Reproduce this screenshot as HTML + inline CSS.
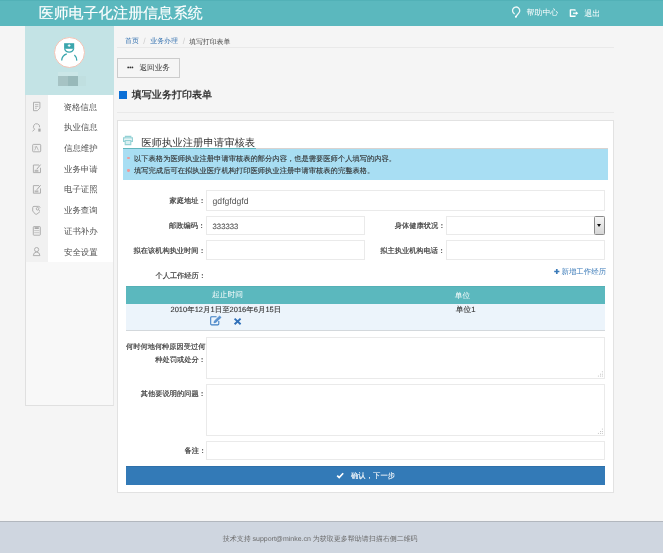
<!DOCTYPE html>
<html><head><meta charset="utf-8">
<style>
*{margin:0;padding:0;box-sizing:border-box}
html,body{width:669px;height:554px;overflow:hidden;background:#fff;font-family:"Liberation Sans",sans-serif;}
.a{position:absolute}
.t{position:absolute;white-space:nowrap;line-height:1;text-rendering:geometricPrecision}
#page{position:absolute;left:0;top:0;width:663px;height:553px;background:#f5f5f5;overflow:hidden;filter:blur(0.35px)}
.inp{position:absolute;background:#fff;border:1px solid #eaeaea}
</style></head>
<body>
<div id="page">

<div class="a" style="left:0;top:0;width:663px;height:26px;background:#5bb8be;border-top:1px solid #52b1b7"></div>
<svg class="a" style="left:506px;top:4px" width="20" height="18" viewBox="506 4 20 18"><path d="M514.3 13.7A3.6 3.6 0 1 1 518.9 12.9L516 16.5" fill="none" stroke="#eef8f8" stroke-width="1.3" stroke-linecap="round"/><circle cx="515.9" cy="16.7" r="1" fill="#fff"/></svg>
<svg class="a" style="left:564px;top:4px" width="20" height="18" viewBox="564 4 20 18"><path d="M575 10.8V9.9H570.4V16.3H575V15.5" fill="none" stroke="#fff" stroke-width="1.4" stroke-linejoin="round"/><path d="M573 13.2H576.4" stroke="#fff" stroke-width="1.2"/><path d="M575.8 11.3L578.3 13.2L575.8 15.1z" fill="#fff"/></svg>

<div class="a" style="left:25px;top:26px;width:89px;height:380.3px;background:#f8f8f8;border:1px solid #e0e0e0;border-top:none;border-right-color:#e6e6e6"></div>
<div class="a" style="left:25px;top:26px;width:89px;height:69px;background:#c3e3e5"></div>
<div class="a" style="left:25px;top:95px;width:23px;height:167px;background:#f1f1f1;border-left:1px solid #e2e2e2"></div>
<div class="a" style="left:48px;top:95px;width:65px;height:167px;background:#fff"></div>
<div class="a" style="left:54px;top:37px;width:31px;height:31px;border-radius:50%;background:#fff;border:1.3px solid #f3c4b6"></div>
<svg class="a" style="left:50px;top:34px" width="40" height="40" viewBox="0 0 40 40">
  <rect x="14.1" y="9.2" width="10.1" height="5.6" fill="#3aa6ad"/>
  <path d="M19.15 10.2v2.8M17.75 11.6h2.8" stroke="#fff" stroke-width="0.9"/>
  <path d="M14.6 14.6A4.7 4.6 0 0 0 23.7 14.6" fill="none" stroke="#3aa6ad" stroke-width="1.3"/>
  <path d="M11.7 26.6C11.8 23.2 13.6 20.9 16.8 19.9M24.4 21.1C25.9 22.3 26.6 24.3 26.8 26.6" fill="none" stroke="#3aa6ad" stroke-width="1.3"/>
</svg>
<div class="a" style="left:58px;top:72px;width:20px;height:3.5px;background:#cbe6e7"></div>
<div class="a" style="left:58px;top:75.6px;width:10px;height:10px;background:#a6c3c4"></div>
<div class="a" style="left:68px;top:75.6px;width:10px;height:10px;background:#98b9ba"></div>
<div class="a" style="left:78px;top:76px;width:8px;height:9.5px;background:#c0dfe0"></div>
<svg class="a" style="left:25px;top:95px" width="25" height="167" viewBox="25 95 25 167" fill="none" stroke="#a8a8a8" stroke-width="0.9">
  <path d="M33.5 102.3h6.4v5.8l-2.6 2.6h-3.8z"/><path d="M35 104.6h3.4M35 106.4h3.4M35 108.2h1.8" stroke-width="0.7"/>
  <path d="M34.6 129.2A3.1 3.1 0 1 1 39.6 127.3"/><path d="M34.6 129.2l-2 2.2"/><rect x="38.3" y="128.6" width="2.3" height="3" fill="#a8a8a8" stroke="none"/>
  <rect x="32.7" y="144.4" width="8" height="7.4" rx="0.8"/><path d="M34.6 150.4l1.9-4.2 1.9 4.2M35.2 146.2v1.5" stroke-width="0.7"/>
  <path d="M39 165h-5.6v7.6h7.1v-4.8"/><path d="M36.8 169.2l3.8-4.6" stroke-width="1"/><rect x="34.6" y="169.8" width="3.8" height="2" fill="#b8b8b8" stroke="none"/>
  <path d="M39 185.6h-5.6v7.6h7.1v-4.8"/><path d="M36.8 189.8l3.8-4.6" stroke-width="1"/><rect x="34.6" y="190.4" width="3.8" height="2" fill="#b8b8b8" stroke="none"/>
  <path d="M32.7 211V207.6q0-1.2 1.3-1.2h4.6q1.3 0 1.6 1.3M40 211.6l-3.2 2.6h-1.4l-2.7-3.2"/><circle cx="37.6" cy="208.8" r="1.3"/><path d="M38.6 209.8l1.3 1.2"/>
  <rect x="33.3" y="226.6" width="7" height="8.6" rx="0.6"/><rect x="34.6" y="227.2" width="4.2" height="1.8" fill="#a8a8a8" stroke="none"/><path d="M34.2 230.6h5.2M34.2 232.7h5.2" stroke-width="0.6"/>
  <circle cx="36.6" cy="249.6" r="2.1"/><path d="M33.3 255.6q0-3.2 3.3-3.6q3.3 0.4 3.3 3.6z"/>
</svg>

<div class="a" style="left:117px;top:47px;width:497px;height:1px;background:#e9e9e9"></div>
<div class="a" style="left:117px;top:58px;width:63px;height:20px;border:1px solid #cccccc;background:#f5f5f5"></div>
<svg class="a" style="left:126px;top:65px" width="9" height="5" viewBox="126 65 9 5"><circle cx="128.2" cy="67.4" r="0.9" fill="#333"/><circle cx="130.3" cy="67.4" r="0.9" fill="#333"/><circle cx="132.4" cy="67.4" r="0.9" fill="#333"/></svg>
<div class="a" style="left:119px;top:91px;width:8px;height:8px;background:#0b6fd6"></div>
<div class="a" style="left:117px;top:112px;width:497px;height:1px;background:#e9e9e9"></div>

<div class="a" style="left:117px;top:120px;width:497px;height:373px;background:#fff;border:1px solid #e2e2e2"></div>
<svg class="a" style="left:120px;top:133px" width="16" height="15" viewBox="120 133 16 15">
  <path d="M125.4 137.6V136.4h5.4v1.2" fill="none" stroke="#93d1d5" stroke-width="1.2"/>
  <path d="M125 141.4h-1.4v-3.6h8.8v3.6H131" fill="none" stroke="#93d1d5" stroke-width="1.2"/>
  <path d="M125.2 140.4v4.2h5.6v-4.2z" fill="#d8eff1" stroke="#93d1d5" stroke-width="1.1"/>
</svg>
<div class="a" style="left:123px;top:148px;width:485px;height:32px;background:#a8def3;border-top:1px solid #d9d3d0"></div>
<div class="a" style="left:123px;top:147.6px;width:133px;height:1.6px;background:#62b6bc"></div>
<div class="a" style="left:127.4px;top:157.2px;width:2.3px;height:2.3px;border-radius:50%;background:#ee9a9a"></div>
<div class="a" style="left:127.4px;top:169.4px;width:2.3px;height:2.3px;border-radius:50%;background:#ee9a9a"></div>

<div class="inp" style="left:206px;top:190px;width:399px;height:21px"></div>
<div class="inp" style="left:206px;top:216px;width:159px;height:19px"></div>
<div class="inp" style="left:446px;top:216px;width:159px;height:19px"></div>
<div class="a" style="left:594px;top:216px;width:11px;height:19px;border:1px solid #8a8a8a;border-radius:1.5px;background:linear-gradient(#f6f6f6,#d6d6d6)"></div>
<div class="a" style="left:597.2px;top:224.2px;width:0;height:0;border-left:2.5px solid transparent;border-right:2.5px solid transparent;border-top:3px solid #111"></div>
<div class="inp" style="left:206px;top:240px;width:159px;height:20px"></div>
<div class="inp" style="left:446px;top:240px;width:159px;height:20px"></div>
<svg class="a" style="left:553px;top:268px" width="8" height="8" viewBox="553 268 8 8"><path d="M556.8 268.9v5.2M554.2 271.5h5.2" stroke="#3a7ab8" stroke-width="1.7"/></svg>

<div class="a" style="left:126px;top:286px;width:479px;height:17.6px;background:#5bb8be;border-top:1px solid #55b0b6"></div>
<div class="a" style="left:126px;top:303.6px;width:479px;height:27.4px;background:#ecf4fb;border-bottom:1px solid #d3d8dc"></div>
<svg class="a" style="left:205px;top:312px" width="40" height="16" viewBox="205 312 40 16">
  <path d="M216.6 316.8h-5q-0.9 0-0.9 0.9v6.3q0 0.9 0.9 0.9h6.3q0.9 0 0.9-0.9v-3" fill="none" stroke="#3b7cc2" stroke-width="1.05"/>
  <path d="M213.9 322.9l0.5-2 5.2-5 1.5 1.5-5.2 5z" fill="#5a92d0" stroke="#3b7cc2" stroke-width="0.5"/>
  <path d="M234.6 318.6l6 5.6M240.6 318.6l-6 5.6" stroke="#2f6fb8" stroke-width="1.9"/>
</svg>

<div class="inp" style="left:206px;top:337px;width:399px;height:41.5px"></div>
<svg class="a" style="left:597px;top:370px" width="8" height="8" viewBox="597 370 8 8" fill="#c4c4c4"><rect x="601.9" y="371.3" width="1" height="1"/><rect x="600" y="373.7" width="1" height="1"/><rect x="601.9" y="373.7" width="1" height="1"/><rect x="597.9" y="375.6" width="1" height="1"/><rect x="600" y="375.6" width="1" height="1"/><rect x="601.9" y="375.6" width="1" height="1"/></svg>
<div class="inp" style="left:206px;top:384px;width:399px;height:51.5px"></div>
<svg class="a" style="left:597px;top:427px" width="8" height="8" viewBox="597 427 8 8" fill="#c4c4c4"><rect x="601.9" y="428.6" width="1" height="1"/><rect x="600" y="431" width="1" height="1"/><rect x="601.9" y="431" width="1" height="1"/><rect x="597.9" y="432.9" width="1" height="1"/><rect x="600" y="432.9" width="1" height="1"/><rect x="601.9" y="432.9" width="1" height="1"/></svg>
<div class="inp" style="left:206px;top:440.8px;width:399px;height:19px"></div>

<div class="a" style="left:126px;top:465.5px;width:479px;height:19.8px;background:#337ab7;border-top:1px solid #2e70a9"></div>
<svg class="a" style="left:335px;top:471px" width="11" height="9" viewBox="335 471 11 9"><path d="M337.2 475.6l2 2 4-4.4" fill="none" stroke="#fff" stroke-width="1.7"/></svg>

<div class="a" style="left:0;top:521.3px;width:663px;height:31.7px;background:#cfd6e0;border-top:1.8px solid #b2b7be"></div>

<div class="t" style="left:38.75px;top:7.40px;font-size:14.929px;color:#fff;-webkit-text-stroke:0.15px #fff;">医师电子化注册信息系统</div>
<div class="t" style="left:526.45px;top:9.42px;font-size:7.977px;color:#fff;">帮助中心</div>
<div class="t" style="left:584.30px;top:9.67px;font-size:7.977px;color:#fff;">退出</div>
<div class="t" style="left:63.50px;top:102.53px;font-size:8.422px;color:#505050;">资格信息</div>
<div class="t" style="left:64.00px;top:123.37px;font-size:8.422px;color:#505050;">执业信息</div>
<div class="t" style="left:64.00px;top:144.21px;font-size:8.422px;color:#505050;">信息维护</div>
<div class="t" style="left:64.00px;top:165.06px;font-size:8.422px;color:#505050;">业务申请</div>
<div class="t" style="left:64.00px;top:185.41px;font-size:8.422px;color:#505050;">电子证照</div>
<div class="t" style="left:64.00px;top:206.25px;font-size:8.422px;color:#505050;">业务查询</div>
<div class="t" style="left:64.00px;top:227.10px;font-size:8.422px;color:#505050;">证书补办</div>
<div class="t" style="left:64.00px;top:247.94px;font-size:8.422px;color:#505050;">安全设置</div>
<div class="t" style="left:125.10px;top:39.25px;font-size:6.906px;color:#3572b0;">首页</div>
<div class="t" style="left:143.30px;top:36.72px;font-size:8.500px;color:#cfcfcf;">/</div>
<div class="t" style="left:150.25px;top:39.25px;font-size:6.906px;color:#3572b0;">业务办理</div>
<div class="t" style="left:182.80px;top:36.72px;font-size:8.500px;color:#cfcfcf;">/</div>
<div class="t" style="left:189.00px;top:39.50px;font-size:6.906px;color:#444;">填写打印表单</div>
<div class="t" style="left:139.50px;top:64.17px;font-size:7.597px;color:#333;">返回业务</div>
<div class="t" style="left:131.80px;top:91.04px;font-size:10.044px;color:#222;-webkit-text-stroke:0.25px #222;">填写业务打印表单</div>
<div class="t" style="left:141.25px;top:138.98px;font-size:10.373px;color:#333;">医师执业注册申请审核表</div>
<div class="t" style="left:134.00px;top:154.59px;font-size:7.291px;color:#2f2f2f;-webkit-text-stroke:0.1px #2f2f2f;">以下表格为医师执业注册申请审核表的部分内容，也是需要医师个人填写的内容。</div>
<div class="t" style="left:134.00px;top:167.49px;font-size:7.291px;color:#2f2f2f;-webkit-text-stroke:0.1px #2f2f2f;">填写完成后可在拟执业医疗机构打印医师执业注册申请审核表的完整表格。</div>
<div class="t" style="left:169.60px;top:197.44px;font-size:7.238px;color:#3a3a3a;-webkit-text-stroke:0.18px #3a3a3a;">家庭地址：</div>
<div class="t" style="left:212.55px;top:196.65px;font-size:8.636px;color:#555;">gdfgfdgfd</div>
<div class="t" style="left:169.10px;top:222.28px;font-size:7.238px;color:#3a3a3a;-webkit-text-stroke:0.18px #3a3a3a;">邮政编码：</div>
<div class="t" style="left:212.55px;top:222.50px;font-size:7.755px;color:#555;-webkit-text-stroke:0.1px #555;">333333</div>
<div class="t" style="left:394.85px;top:222.49px;font-size:7.238px;color:#3a3a3a;-webkit-text-stroke:0.18px #3a3a3a;">身体健康状况：</div>
<div class="t" style="left:133.55px;top:246.58px;font-size:7.238px;color:#3a3a3a;-webkit-text-stroke:0.18px #3a3a3a;">拟在该机构执业时间：</div>
<div class="t" style="left:380.25px;top:246.69px;font-size:7.238px;color:#3a3a3a;-webkit-text-stroke:0.18px #3a3a3a;">拟主执业机构电话：</div>
<div class="t" style="left:561.45px;top:267.78px;font-size:7.441px;color:#3a7ab8;">新增工作经历</div>
<div class="t" style="left:155.45px;top:272.49px;font-size:7.238px;color:#3a3a3a;-webkit-text-stroke:0.18px #3a3a3a;">个人工作经历：</div>
<div class="t" style="left:212.10px;top:291.32px;font-size:7.700px;color:#fff;">起止时间</div>
<div class="t" style="left:454.80px;top:291.62px;font-size:7.700px;color:#fff;">单位</div>
<div class="t" style="left:170.55px;top:306.38px;font-size:7.499px;color:#333;-webkit-text-stroke:0.1px #333;">2010年12月1日至2016年6月15日</div>
<div class="t" style="left:455.80px;top:305.78px;font-size:7.685px;color:#333;-webkit-text-stroke:0.1px #333;">单位1</div>
<div class="t" style="left:126.00px;top:343.43px;font-size:7.238px;color:#3a3a3a;-webkit-text-stroke:0.18px #3a3a3a;">何时何地何种原因受过何</div>
<div class="t" style="left:155.30px;top:356.49px;font-size:7.238px;color:#3a3a3a;-webkit-text-stroke:0.18px #3a3a3a;">种处罚或处分：</div>
<div class="t" style="left:140.85px;top:389.54px;font-size:7.238px;color:#3a3a3a;-webkit-text-stroke:0.18px #3a3a3a;">其他要说明的问题：</div>
<div class="t" style="left:184.45px;top:446.83px;font-size:7.238px;color:#3a3a3a;-webkit-text-stroke:0.18px #3a3a3a;">备注：</div>
<div class="t" style="left:351.00px;top:472.38px;font-size:7.358px;color:#fff;-webkit-text-stroke:0.1px #fff;">确认，下一步</div>
<div class="t" style="left:222.70px;top:535.85px;font-size:6.990px;color:#6a6a6a;">技术支持 support@minke.cn 为获取更多帮助请扫描右侧二维码</div>
</div>
</body></html>
